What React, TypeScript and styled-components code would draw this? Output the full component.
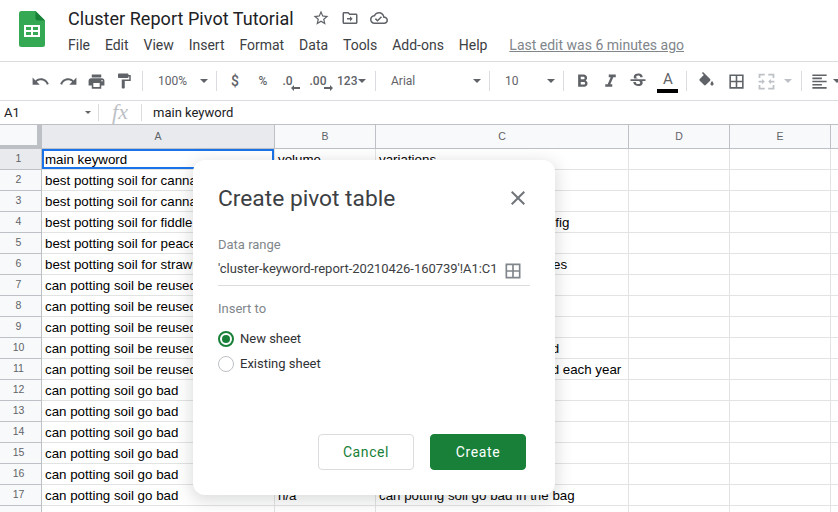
import React from 'react'
import styled, { createGlobalStyle } from 'styled-components'

const GlobalStyle = createGlobalStyle`
  html, body {
    margin: 0;
    padding: 0;
    width: 838px;
    height: 512px;
    overflow: hidden;
    background: #fff;
  }
  * {
    box-sizing: border-box;
  }
`

const PATHS = {
  undo: 'M12.5 8c-2.65 0-5.05.99-6.9 2.6L2 7v9h9l-3.62-3.62c1.39-1.16 3.16-1.88 5.12-1.88 3.54 0 6.55 2.31 7.6 5.5l2.37-.78C21.08 11.03 17.15 8 12.5 8z',
  redo: 'M18.4 10.6C16.55 8.99 14.15 8 11.5 8c-4.65 0-8.58 3.03-9.96 7.22L3.9 16c1.05-3.19 4.05-5.5 7.6-5.5 1.95 0 3.73.72 5.12 1.88L13 16h9V7l-3.6 3.6z',
  print: 'M19 8H5c-1.66 0-3 1.34-3 3v6h4v4h12v-4h4v-6c0-1.66-1.34-3-3-3zm-3 11H8v-5h8v5zm3-7c-.55 0-1-.45-1-1s.45-1 1-1 1 .45 1 1-.45 1-1 1zm-1-9H6v4h12V3z',
  paint: 'M18 4V3c0-.55-.45-1-1-1H5c-.55 0-1 .45-1 1v4c0 .55.45 1 1 1h12c.55 0 1-.45 1-1V6h1v4H9v11c0 .55.45 1 1 1h2c.55 0 1-.45 1-1v-9h8V4h-3z',
  bold: 'M15.6 10.79c.97-.67 1.65-1.77 1.65-2.79 0-2.26-1.75-4-4-4H7v14h7.04c2.09 0 3.71-1.7 3.71-3.79 0-1.52-.86-2.82-2.15-3.42zM10 6.5h3c.83 0 1.5.67 1.5 1.5s-.67 1.5-1.5 1.5h-3v-3zm3.5 9H10v-3h3.5c.83 0 1.5.67 1.5 1.5s-.67 1.5-1.5 1.5z',
  italic: 'M10 4v3h2.21l-3.42 8H6v3h8v-3h-2.21l3.42-8H18V4z',
  strike: 'M6.85 7.08C6.85 4.37 9.45 3 12.24 3c1.64 0 3 .49 3.9 1.28.77.65 1.46 1.73 1.46 3.24h-3.01c0-.31-.05-.59-.15-.85-.29-.86-1.2-1.28-2.25-1.28-1.86 0-2.34 1.02-2.34 1.7 0 .48.25.88.74 1.21.38.25.77.48 1.41.7H7.39c-.21-.34-.54-.89-.54-1.92zM21 12v-2H3v2h9.62c1.15.45 1.96.75 1.96 1.97 0 1-.81 1.67-2.28 1.67-1.54 0-2.93-.54-2.93-2.51H6.4c0 .55.08 1.13.24 1.58.81 2.29 3.29 3.3 5.67 3.3 2.27 0 5.3-.89 5.3-4.05 0-.3-.01-1.16-.48-1.94H21V12z',
  fill: 'M16.56 8.94L7.62 0 6.21 1.41l2.38 2.38-5.15 5.15c-.59.59-.59 1.54 0 2.12l5.5 5.5c.29.29.68.44 1.06.44s.77-.15 1.06-.44l5.5-5.5c.59-.58.59-1.53 0-2.12zM19 11.5s-2 2.17-2 3.5c0 1.1.9 2 2 2s2-.9 2-2c0-1.33-2-3.5-2-3.5z',
  borders: 'M3 3v18h18V3H3zm8 16H5v-6h6v6zm0-8H5V5h6v6zm8 8h-6v-6h6v6zm0-8h-6V5h6v6z',
  merge: 'M3 3h7v2H5v3H3V3zm11 0h7v5h-2V5h-5V3zM3 16h2v3h5v2H3v-5zm16 0h2v5h-7v-2h5v-3zM3 11h4V9l3 3-3 3v-2H3v-2zm18 0v2h-4v2l-3-3 3-3v2h4z',
  alignLeft: 'M15 15H3v2h12v-2zm0-8H3v2h12V7zM3 13h18v-2H3v2zm0 8h18v-2H3v2zM3 3v2h18V3H3z',
  star: 'M22 9.24l-7.19-.62L12 2 9.19 8.63 2 9.24l5.46 4.73L5.82 21 12 17.27 18.18 21l-1.63-7.03L22 9.24zM12 15.4l-3.76 2.27 1-4.28-3.32-2.88 4.38-.38L12 6.1l1.71 4.04 4.38.38-3.32 2.88 1 4.28L12 15.4z',
  folder: 'M20 6h-8l-2-2H4c-1.1 0-2 .9-2 2v12c0 1.1.9 2 2 2h16c1.1 0 2-.9 2-2V8c0-1.1-.9-2-2-2zm0 12H4V6h5.17l2 2H20v10zm-8-4H8v-2h4V9.500l3.500 3.500-3.500 3.500V14z',
  cloud: 'M19.35 10.04C18.67 6.59 15.64 4 12 4 9.11 4 6.6 5.64 5.35 8.04 2.34 8.36 0 10.91 0 14c0 3.31 2.69 6 6 6h13c2.76 0 5-2.24 5-5 0-2.64-2.05-4.78-4.65-4.96zM19 18H6c-2.21 0-4-1.79-4-4 0-2.05 1.53-3.76 3.56-3.97l1.07-.11.5-.95C8.08 7.14 9.94 6 12 6c2.62 0 4.88 1.86 5.39 4.43l.3 1.5 1.53.11c1.56.1 2.78 1.41 2.78 2.96 0 1.65-1.35 3-3 3zm-9-3.82l-2.09-2.09L6.5 13.5 10 17l6.01-6.01-1.41-1.41z',
  close: 'M19 6.41L17.59 5 12 10.59 6.41 5 5 6.41 10.59 12 5 17.59 6.41 19 12 13.41 17.59 19 19 17.59 13.41 12z',
}

const ROWS: [string, string, string][] = [
  ['main keyword', 'volume', 'variations'],
  ['best potting soil for cannabis', 'n/a', 'best potting soil for cannabis'],
  ['best potting soil for cannabis', 'n/a', 'best soil for cannabis'],
  ['best potting soil for fiddle leaf fig', 'n/a', 'best potting soil for fiddle leaf fig'],
  ['best potting soil for peace lily', 'n/a', 'best potting soil for peace lily'],
  ['best potting soil for strawberries', 'n/a', 'best potting soil for strawberries'],
  ['can potting soil be reused', 'n/a', 'can potting soil be reused'],
  ['can potting soil be reused', 'n/a', 'can you reuse potting soil'],
  ['can potting soil be reused', 'n/a', 'reuse potting soil'],
  ['can potting soil be reused', 'n/a', 'can new potting soil be reused'],
  ['can potting soil be reused', 'n/a', 'can new potting soil be reused each year'],
  ['can potting soil go bad', 'n/a', 'can potting soil go bad'],
  ['can potting soil go bad', 'n/a', 'does potting soil go bad'],
  ['can potting soil go bad', 'n/a', 'potting soil go bad'],
  ['can potting soil go bad', 'n/a', 'can soil go bad'],
  ['can potting soil go bad', 'n/a', 'can potting soil go bad'],
  ['can potting soil go bad', 'n/a', 'can potting soil go bad in the bag'],
]

const COLUMNS = [
  { label: 'A', width: 233 },
  { label: 'B', width: 101 },
  { label: 'C', width: 253 },
  { label: 'D', width: 101 },
  { label: 'E', width: 101 },
  { label: '', width: 8 },
]

const Page = styled.div`
  width: 838px;
  height: 512px;
  position: relative;
  overflow: hidden;
  background: #fff;
  font-family: Roboto, sans-serif;
`

const TitleBar = styled.header`
  height: 62px;
  display: flex;
  border-bottom: 1px solid #dadce0;
`

const Logo = styled.svg`
  width: 26px;
  height: 36px;
  margin: 11px 23px 0 19px;
  flex: none;
`

const TitleColumn = styled.div`
  display: flex;
  flex-direction: column;
`

const TitleRow = styled.div`
  display: flex;
  align-items: center;
  height: 24px;
  margin-top: 6px;
`

const DocTitle = styled.div`
  font-size: 18px;
  letter-spacing: 0.05px;
  color: #202124;
  width: 244px;
  white-space: nowrap;
`

const TitleIcons = styled.div`
  display: flex;
  gap: 11px;
`

const MenuRow = styled.nav`
  display: flex;
  align-items: center;
  height: 20px;
  margin-top: 5px;
  font-size: 14px;
  color: #3c4043;
`

const MenuItem = styled.span`
  margin-right: 14.9px;
  white-space: nowrap;
`

const LastEdit = styled.span`
  margin-left: 7px;
  color: #80868b;
  text-decoration: underline;
  white-space: nowrap;
`

const Toolbar = styled.div`
  height: 39px;
  display: flex;
  align-items: center;
  padding-left: 26px;
  border-bottom: 1px solid #dadce0;
  color: #5f6368;
`

const ToolButton = styled.div<{ $muted?: boolean; $shift?: number }>`
  width: 28px;
  height: 28px;
  flex: none;
  margin-left: ${(p) => p.$shift ?? 0}px;
  display: flex;
  align-items: center;
  justify-content: center;
  color: ${(p) => (p.$muted ? '#bdc1c6' : '#5f6368')};
  font-size: 12px;
  font-weight: 500;
  position: relative;
`

const Dollar = styled(ToolButton)`
  font-size: 14px;
`

const Separator = styled.div<{ $shift?: number }>`
  width: 1px;
  height: 20px;
  margin: 0 4px 0 ${(p) => 4 + (p.$shift ?? 0)}px;
  flex: none;
  background: #dadce0;
`

const Select = styled.div<{ $width: number }>`
  width: ${(p) => p.$width}px;
  flex: none;
  display: flex;
  align-items: center;
  justify-content: space-between;
  padding: 0 4px 0 11px;
  font-size: 12px;
  color: #5f6368;
`

const Caret = styled.span<{ $muted?: boolean; $shift?: number }>`
  width: 0;
  height: 0;
  flex: none;
  margin-left: ${(p) => p.$shift ?? 0}px;
  border-left: 4px solid transparent;
  border-right: 4px solid transparent;
  border-top: 4px solid ${(p) => (p.$muted ? '#bdc1c6' : '#5f6368')};
`

const SmallCaret = styled.span`
  width: 0;
  height: 0;
  flex: none;
  border-left: 3px solid transparent;
  border-right: 3px solid transparent;
  border-top: 3px solid #5f6368;
`

const DecimalButton = styled(ToolButton)<{ $inset: number }>`
  padding-right: ${(p) => p.$inset}px;
  svg {
    position: absolute;
    right: ${(p) => p.$inset - 2}px;
    bottom: 4px;
  }
`

const FormatNumber = styled.div`
  width: 38px;
  flex: none;
  display: flex;
  align-items: center;
  gap: 1px;
  font-size: 12px;
  font-weight: 500;
  padding-left: 4px;
`

const ColorBar = styled.span`
  position: absolute;
  left: 3px;
  right: 4px;
  bottom: 2px;
  height: 4px;
  background: #000;
`

const TextColor = styled(ToolButton)`
  font-size: 15px;
  font-weight: 400;
  padding-bottom: 4px;
`

const FormulaBar = styled.div`
  height: 24px;
  display: flex;
  align-items: center;
  border-bottom: 1px solid #bdc1c6;
  background: #fff;
`

const NameBox = styled.div`
  width: 99px;
  height: 17px;
  display: flex;
  align-items: center;
  justify-content: space-between;
  padding: 0 7px 0 4px;
  font-size: 13px;
  color: #202124;
  border-right: 1px solid #dadce0;
`

const FxLabel = styled.div`
  width: 43px;
  height: 17px;
  text-align: center;
  font-family: 'Liberation Serif', serif;
  font-style: italic;
  font-size: 22px;
  line-height: 16px;
  color: #bdc1c6;
  border-right: 1px solid #dadce0;
`

const FormulaText = styled.div`
  padding-left: 11px;
  font-size: 13px;
  color: #202124;
`

const GridRow = styled.div`
  display: flex;
`

const Corner = styled.div`
  width: 42px;
  height: 24px;
  flex: none;
  background: #f8f9fa;
  border-right: 5px solid #bdc1c6;
  border-bottom: 4px solid #bdc1c6;
`

const ColumnHeader = styled.div<{ $width: number; $active?: boolean }>`
  width: ${(p) => p.$width}px;
  height: 24px;
  flex: none;
  text-align: center;
  font-size: 10.5px;
  line-height: 23px;
  font-family: 'Liberation Sans', sans-serif;
  color: #5f6368;
  background: ${(p) => (p.$active ? '#e8eaed' : '#f8f9fa')};
  border-right: 1px solid #bdc1c6;
  border-bottom: 1px solid #bdc1c6;
`

const RowHeader = styled.div<{ $active?: boolean }>`
  width: 42px;
  height: 21px;
  flex: none;
  padding-right: 4px;
  text-align: center;
  font-family: 'Liberation Sans', sans-serif;
  font-size: 10.5px;
  line-height: 19px;
  color: #5f6368;
  background: ${(p) => (p.$active ? '#e8eaed' : '#f8f9fa')};
  border-right: 1px solid #bdc1c6;
  border-bottom: 1px solid #bdc1c6;
`

const Cell = styled.div<{ $width: number; $selected?: boolean }>`
  width: ${(p) => p.$width}px;
  height: 21px;
  flex: none;
  padding: 0 3px;
  overflow: hidden;
  white-space: nowrap;
  font-family: 'Liberation Sans', Arial, sans-serif;
  font-size: 13.33px;
  line-height: 22px;
  color: #000;
  border-right: 1px solid #e2e3e3;
  border-bottom: 1px solid #e2e3e3;
  ${(p) => p.$selected && 'box-shadow: inset 0 0 0 2px #1a73e8;'}
`

const Dialog = styled.div`
  position: absolute;
  left: 193px;
  top: 160px;
  width: 362px;
  height: 335px;
  padding: 24px 25px 0;
  display: flex;
  flex-direction: column;
  background: #fff;
  border-radius: 12px;
  box-shadow: 0 4px 16px 2px rgba(60, 64, 67, 0.18);
`

const DialogHeader = styled.div`
  display: flex;
  align-items: center;
  justify-content: space-between;
  height: 28px;
  margin-bottom: 25px;
`

const DialogTitle = styled.h2`
  margin: 0;
  font-family: Roboto, sans-serif;
  font-size: 22.75px;
  font-weight: 400;
  color: #3c4043;
`

const FieldLabel = styled.div`
  font-size: 13px;
  line-height: 16px;
  color: #80868b;
`

const RangeField = styled.div`
  width: 312px;
  height: 33px;
  margin-bottom: 15px;
  padding: 0 7px 2px 0;
  display: flex;
  align-items: center;
  justify-content: space-between;
  border-bottom: 1px solid #dadce0;
  font-size: 13px;
  letter-spacing: -0.04px;
  color: #3c4043;
  white-space: nowrap;
  svg {
    margin-top: 5px;
  }
`

const RadioGroup = styled.div`
  display: flex;
  flex-direction: column;
  gap: 9px;
  margin-top: 14px;
`

const RadioRow = styled.div`
  display: flex;
  align-items: center;
  gap: 6px;
  height: 16px;
  font-size: 13px;
  color: #303134;
`

const RadioText = styled.span`
  margin-top: -2px;
`

const RadioMark = styled.span<{ $checked?: boolean }>`
  width: 16px;
  height: 16px;
  flex: none;
  border-radius: 50%;
  background: #fff;
  border: ${(p) => (p.$checked ? '2px solid #188038' : '1px solid #bdc1c6')};
  display: flex;
  align-items: center;
  justify-content: center;
  &::after {
    content: '';
    display: ${(p) => (p.$checked ? 'block' : 'none')};
    width: 8px;
    height: 8px;
    border-radius: 50%;
    background: #188038;
  }
`

const DialogActions = styled.div`
  position: absolute;
  right: 29px;
  bottom: 25px;
  display: flex;
  gap: 16px;
`

const ActionButton = styled.button<{ $primary?: boolean }>`
  width: 96px;
  height: 36px;
  padding: 0;
  border-radius: 4px;
  font-family: Roboto, sans-serif;
  font-size: 14px;
  font-weight: 400;
  letter-spacing: 0.6px;
  color: ${(p) => (p.$primary ? '#fff' : '#188038')};
  background: ${(p) => (p.$primary ? '#188038' : '#fff')};
  border: 1px solid ${(p) => (p.$primary ? '#188038' : '#dadce0')};
`

const Icon = ({ d, size = 18, color = 'currentColor' }: { d: string; size?: number; color?: string }) => (
  <svg width={size} height={size} viewBox="0 0 24 24" fill={color}>
    <path d={d} />
  </svg>
)

const SheetsLogo = () => (
  <Logo viewBox="0 0 26 36">
    <path d="M16.5 0H2.500A2.500 2.500 0 0 0 0 2.500v31A2.500 2.500 0 0 0 2.500 36h21a2.500 2.500 0 0 0 2.500-2.500V9.500L16.500 0z" fill="#34a853" />
    <path d="M16.500 0v7a2.500 2.500 0 0 0 2.500 2.500h7L16.500 0z" fill="#188038" />
    <path d="M5 14h16v12H5V14zm2 2v3h5v-3H7zm7 0v3h5v-3h-5zM7 21v3h5v-3H7zm7 0v3h5v-3h-5z" fill="#fff" fillRule="evenodd" />
  </Logo>
)

const ArrowLeft = () => (
  <svg width="9" height="6" viewBox="0 0 9 6" fill="#5f6368">
    <path d="M0 3l3-3v2h6v2H3v2z" />
  </svg>
)

const ArrowRight = () => (
  <svg width="9" height="6" viewBox="0 0 9 6" fill="#5f6368">
    <path d="M9 3L6 0v2H0v2h6v2z" />
  </svg>
)

const App = () => (
  <Page>
    <GlobalStyle />
    <TitleBar>
      <SheetsLogo />
      <TitleColumn>
        <TitleRow>
          <DocTitle>Cluster Report Pivot Tutorial</DocTitle>
          <TitleIcons>
            <Icon d={PATHS.star} color="#5f6368" />
            <Icon d={PATHS.folder} color="#5f6368" />
            <Icon d={PATHS.cloud} color="#5f6368" />
          </TitleIcons>
        </TitleRow>
        <MenuRow>
          {['File', 'Edit', 'View', 'Insert', 'Format', 'Data', 'Tools', 'Add-ons', 'Help'].map((m) => (
            <MenuItem key={m}>{m}</MenuItem>
          ))}
          <LastEdit>Last edit was 6 minutes ago</LastEdit>
        </MenuRow>
      </TitleColumn>
    </TitleBar>

    <Toolbar>
      <ToolButton><Icon d={PATHS.undo} size={19} /></ToolButton>
      <ToolButton><Icon d={PATHS.redo} size={19} /></ToolButton>
      <ToolButton><Icon d={PATHS.print} size={19} /></ToolButton>
      <ToolButton><Icon d={PATHS.paint} /></ToolButton>
      <Separator />
      <Select $width={65}>100%<Caret /></Select>
      <Separator />
      <Dollar>$</Dollar>
      <ToolButton>%</ToolButton>
      <DecimalButton $inset={7}>.0<ArrowLeft /></DecimalButton>
      <DecimalButton $inset={2}>.00<ArrowRight /></DecimalButton>
      <FormatNumber>123<Caret /></FormatNumber>
      <Separator />
      <Select $width={105}>Arial<Caret /></Select>
      <Separator />
      <Select $width={65}>10<Caret /></Select>
      <Separator />
      <ToolButton><Icon d={PATHS.bold} size={21} /></ToolButton>
      <ToolButton><Icon d={PATHS.italic} size={21} /></ToolButton>
      <ToolButton><Icon d={PATHS.strike} size={20} /></ToolButton>
      <TextColor $shift={2}>A<ColorBar /></TextColor>
      <Separator />
      <ToolButton $shift={1}><Icon d={PATHS.fill} size={19} /></ToolButton>
      <ToolButton $shift={2}><Icon d={PATHS.borders} size={19} /></ToolButton>
      <ToolButton $shift={2} $muted><Icon d={PATHS.merge} size={21} /></ToolButton>
      <Caret $muted $shift={4} />
      <Separator $shift={5} />
      <ToolButton $shift={-1}><Icon d={PATHS.alignLeft} size={19} /></ToolButton>
      <Caret />
    </Toolbar>

    <FormulaBar>
      <NameBox>A1<SmallCaret /></NameBox>
      <FxLabel>fx</FxLabel>
      <FormulaText>main keyword</FormulaText>
    </FormulaBar>

    <GridRow>
      <Corner />
      {COLUMNS.map((c, i) => (
        <ColumnHeader key={i} $width={c.width} $active={i === 0}>{c.label}</ColumnHeader>
      ))}
    </GridRow>

    {[...ROWS, ['', '', ''] as [string, string, string]].map((row, r) => (
      <GridRow key={r}>
        <RowHeader $active={r === 0}>{r === 17 ? '' : r + 1}</RowHeader>
        {COLUMNS.map((c, i) => (
          <Cell key={i} $width={c.width} $selected={r === 0 && i === 0}>{row[i]}</Cell>
        ))}
      </GridRow>
    ))}

    <Dialog>
      <DialogHeader>
        <DialogTitle>Create pivot table</DialogTitle>
        <Icon d={PATHS.close} size={24} color="#70757a" />
      </DialogHeader>
      <FieldLabel>Data range</FieldLabel>
      <RangeField>
        'cluster-keyword-report-20210426-160739'!A1:C1
        <Icon d={PATHS.borders} size={20} color="#80868b" />
      </RangeField>
      <FieldLabel>Insert to</FieldLabel>
      <RadioGroup>
        <RadioRow><RadioMark $checked /><RadioText>New sheet</RadioText></RadioRow>
        <RadioRow><RadioMark /><RadioText>Existing sheet</RadioText></RadioRow>
      </RadioGroup>
      <DialogActions>
        <ActionButton>Cancel</ActionButton>
        <ActionButton $primary>Create</ActionButton>
      </DialogActions>
    </Dialog>
  </Page>
)

export default App
